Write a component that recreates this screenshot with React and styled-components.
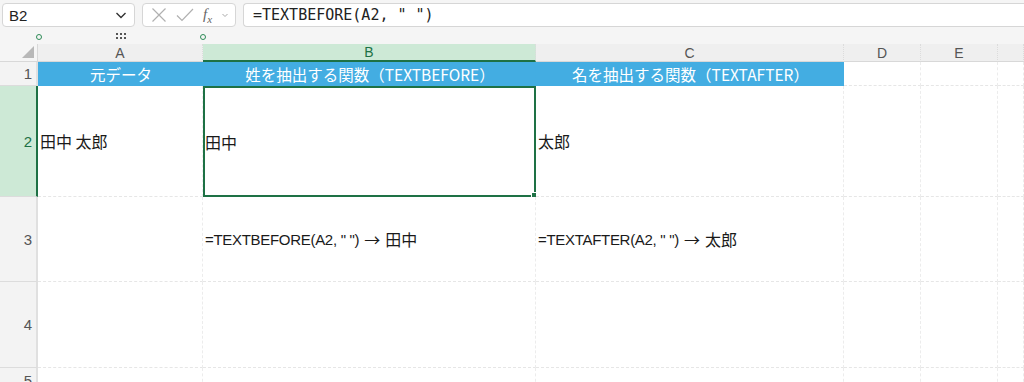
import React from "react";
import styled, { createGlobalStyle } from "styled-components";

const GlobalStyle = createGlobalStyle`
  html, body { margin: 0; padding: 0; background: #fff; }
  body { font-family: "Liberation Sans", "Noto Sans CJK JP", sans-serif; }
`;

const COLS = "38px 165px 333px 308px 77px 77px 1fr";
const GREEN = "#1e7145";
const BLUE = "#43ade2";

const Sheet = styled.div`
  width: 1024px;
  height: 382px;
  overflow: hidden;
  background: #fff;
`;

const Top = styled.div`
  background: #f5f5f5;
`;

const Toolbar = styled.div`
  display: flex;
  align-items: center;
  height: 30px;
  padding: 0 0 0 2px;
  gap: 7px;
`;

const Box = styled.div`
  height: 24px;
  box-sizing: border-box;
  border: 1px solid #d6d6d6;
  border-radius: 4px;
  background: #fff;
  display: flex;
  align-items: center;
`;

const NameBox = styled(Box)`
  width: 133px;
  padding: 0 6px 0 6px;
  justify-content: space-between;
  font-size: 15px;
  color: #222;
`;

const ActionBox = styled(Box)`
  width: 94px;
  padding: 0 5px 0 8px;
  gap: 9px;
  color: #b5b5b5;
`;

const FormulaBox = styled(Box)`
  flex: 1;
  border-right: none;
  border-radius: 4px 0 0 4px;
  padding-left: 9px;
  font-family: "DejaVu Sans Mono", "Liberation Mono", monospace;
  font-size: 15px;
  color: #222;
`;

const Fx = styled.span`
  font-family: "Liberation Serif", serif;
  font-style: italic;
  font-size: 15px;
  color: #666;

  sub {
    font-size: 11px;
  }
`;

const Strip = styled.div`
  position: relative;
  height: 14px;
`;

const Ring = styled.span`
  position: absolute;
  top: 4px;
  left: ${(p) => p.$x}px;
  width: 4px;
  height: 4px;
  border: 1.5px solid #2e8b57;
  border-radius: 50%;
`;

const Dots = styled.span`
  position: absolute;
  top: 3px;
  left: 116px;
  display: grid;
  grid-template-columns: repeat(3, 2px);
  gap: 2px;

  i {
    width: 2px;
    height: 2px;
    background: #555;
  }
`;

const Grid = styled.div`
  display: grid;
  grid-template-columns: ${COLS};
  grid-template-rows: 18px 24px 111px 85px 86px 30px;
`;

const Corner = styled.div`
  position: relative;
  background: #f5f5f5;
  border-right: 1px solid #d8d8d8;
  border-bottom: 1px solid #d8d8d8;

  &::after {
    content: "";
    position: absolute;
    right: 3px;
    bottom: 3px;
    border-style: solid;
    border-width: 0 0 12px 12px;
    border-color: transparent transparent #b8b8b8 transparent;
  }
`;

const ColHead = styled.div`
  display: flex;
  align-items: center;
  justify-content: center;
  font-size: 14px;
  background: ${(p) => (p.$active ? "#cde9d6" : "#efefef")};
  color: ${(p) => (p.$active ? GREEN : "#555")};
  border-right: 1px dotted #dcdcdc;
  border-bottom: ${(p) => (p.$active ? `2px solid ${GREEN}` : "1px solid #d8d8d8")};
  box-sizing: border-box;
`;

const RowHead = styled.div`
  display: flex;
  align-items: ${(p) => (p.$top ? "flex-start" : "center")};
  justify-content: flex-end;
  padding-right: 4px;
  padding-top: ${(p) => (p.$top ? "4px" : "0")};
  font-size: 15px;
  background: ${(p) => (p.$active ? "#cde9d6" : "#f3f3f3")};
  color: ${(p) => (p.$active ? GREEN : "#555")};
  border-right: ${(p) => (p.$active ? `2px solid ${GREEN}` : "2px solid #e0e0e0")};
  border-bottom: 1px solid #dcdcdc;
  box-sizing: border-box;
`;

const Cell = styled.div`
  position: relative;
  display: flex;
  align-items: center;
  justify-content: ${(p) => (p.$center ? "center" : "flex-start")};
  padding-left: 2px;
  box-sizing: border-box;
  font-family: "Noto Sans CJK JP", "Liberation Sans", sans-serif;
  font-size: ${(p) => (p.$fill ? "15.5px" : "16px")};
  white-space: nowrap;
  background: ${(p) => (p.$fill ? BLUE : "#fff")};
  color: ${(p) => (p.$fill ? "#fff" : "#1a1a1a")};
  border-right: 1px dashed ${(p) => (p.$fill ? BLUE : "#ececec")};
  border-bottom: 1px dashed ${(p) => (p.$fill ? BLUE : "#e6e6e6")};
`;

const Selected = styled(Cell)`
  border: 2px solid ${GREEN};
  padding-left: 0;

  &::after {
    content: "";
    position: absolute;
    right: -4px;
    bottom: -4px;
    width: 5px;
    height: 5px;
    background: ${GREEN};
    border: 1px solid #fff;
  }
`;

const Formula = styled.span`
  font-family: "Liberation Sans", "Noto Sans CJK JP", sans-serif;
  font-size: 15px;
  letter-spacing: -0.3px;
  margin-right: 5px;
`;

const Arrow = styled.span`
  margin-right: 5px;
`;

const Chevron = () => (
  <svg width="14" height="14" viewBox="0 0 14 14" fill="none" stroke="#333" strokeWidth="1.4">
    <path d="M2.5 5l4.5 4.5L11.5 5" />
  </svg>
);

const Cross = () => (
  <svg width="16" height="16" viewBox="0 0 16 16" fill="none" stroke="#b0b0b0" strokeWidth="1.2">
    <path d="M1.5 1.5l13 13M14.5 1.5l-13 13" />
  </svg>
);

const Check = () => (
  <svg width="18" height="16" viewBox="0 0 18 16" fill="none" stroke="#b0b0b0" strokeWidth="1.2">
    <path d="M1 8.5l5 5L17 2" />
  </svg>
);

const SmallChevron = () => (
  <svg width="8" height="8" viewBox="0 0 8 8" fill="none" stroke="#aaa" strokeWidth="1">
    <path d="M1.5 3l2.5 2.5L6.5 3" />
  </svg>
);

const cols = ["A", "B", "C", "D", "E", ""];

const App = () => {
  return (
    <Sheet>
      <GlobalStyle />
      <Top>
        <Toolbar>
          <NameBox>
            B2
            <Chevron />
          </NameBox>
          <ActionBox>
            <Cross />
            <Check />
            <Fx>
              f<sub>x</sub>
            </Fx>
            <SmallChevron />
          </ActionBox>
          <FormulaBox>=TEXTBEFORE(A2, " ")</FormulaBox>
        </Toolbar>
        <Strip>
          <Ring $x={36} />
          <Dots>
            <i /><i /><i /><i /><i /><i />
          </Dots>
          <Ring $x={200} />
        </Strip>
      </Top>
      <Grid>
        <Corner />
        {cols.map((c) => (
          <ColHead key={c || "F"} $active={c === "B"}>
            {c}
          </ColHead>
        ))}

        <RowHead>1</RowHead>
        <Cell $fill $center>元データ</Cell>
        <Cell $fill $center>姓を抽出する関数（TEXTBEFORE）</Cell>
        <Cell $fill $center>名を抽出する関数（TEXTAFTER）</Cell>
        <Cell />
        <Cell />
        <Cell />

        <RowHead $active>2</RowHead>
        <Cell>田中 太郎</Cell>
        <Selected>田中</Selected>
        <Cell>太郎</Cell>
        <Cell />
        <Cell />
        <Cell />

        <RowHead>3</RowHead>
        <Cell />
        <Cell>
          <Formula>=TEXTBEFORE(A2, " ")</Formula>
          <Arrow>→</Arrow>田中
        </Cell>
        <Cell>
          <Formula>=TEXTAFTER(A2, " ")</Formula>
          <Arrow>→</Arrow>太郎
        </Cell>
        <Cell />
        <Cell />
        <Cell />

        <RowHead>4</RowHead>
        <Cell />
        <Cell />
        <Cell />
        <Cell />
        <Cell />
        <Cell />

        <RowHead $top>5</RowHead>
        <Cell />
        <Cell />
        <Cell />
        <Cell />
        <Cell />
        <Cell />
      </Grid>
    </Sheet>
  );
};

export default App;
